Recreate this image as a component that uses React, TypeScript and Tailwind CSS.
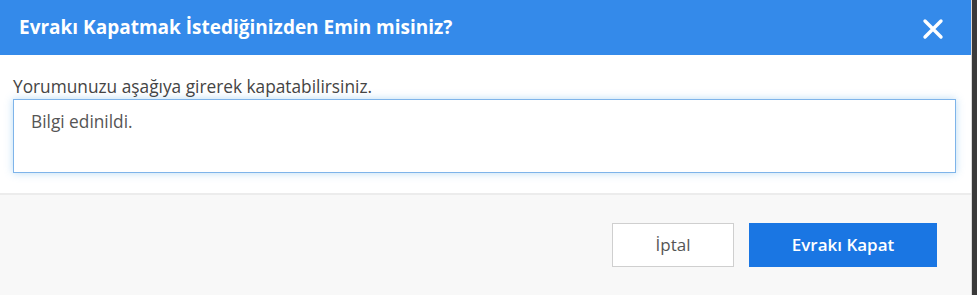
export default function App() {
  return (
    <div className="flex h-[295px] w-[977px] overflow-hidden bg-[#3a3a3a] font-['Open_Sans',sans-serif]">
      <div className="flex w-[972px] flex-col border-r border-[#d8d8d8] bg-white">
        {/* Header */}
        <div className="flex h-[55px] shrink-0 items-center justify-between bg-[#348aea] pl-[19px] pr-[27px]">
          <h1 className="text-[19px] font-bold text-white">Evrakı Kapatmak İstediğinizden Emin misiniz?</h1>
          <svg width="22" height="22" viewBox="0 0 22 22" className="mt-[3px]">
            <path d="M3 3L19 19M19 3L3 19" stroke="white" strokeWidth="3.4" strokeLinecap="round" />
          </svg>
        </div>

        {/* Body */}
        <div className="shrink-0 px-[13px] pb-[20px] pt-[22px]">
          <label className="block text-[17.3px] leading-[20px] text-[#444]">Yorumunuzu aşağıya girerek kapatabilirsiniz.</label>
          <div className="mt-[2px] h-[74px] w-[943px] border-[1.5px] border-[#7eb4ea] bg-white px-[17px] py-[11px] text-[17.3px] leading-[22px] text-[#555] shadow-[0_0_8px_rgba(102,175,233,0.45)]">
            Bilgi edinildi.
          </div>
        </div>

        {/* Footer */}
        <div className="flex flex-1 items-start justify-end gap-[15px] border-t-2 border-[#ececec] bg-[#f8f8f8] pr-[34px] pt-[28px]">
          <button className="h-[44px] w-[122px] border border-[#cfcfcf] bg-white text-[17px] text-[#555]">İptal</button>
          <button className="h-[44px] w-[188px] bg-[#1a76e3] text-[17px] font-semibold text-white">Evrakı Kapat</button>
        </div>
      </div>
    </div>
  );
}
